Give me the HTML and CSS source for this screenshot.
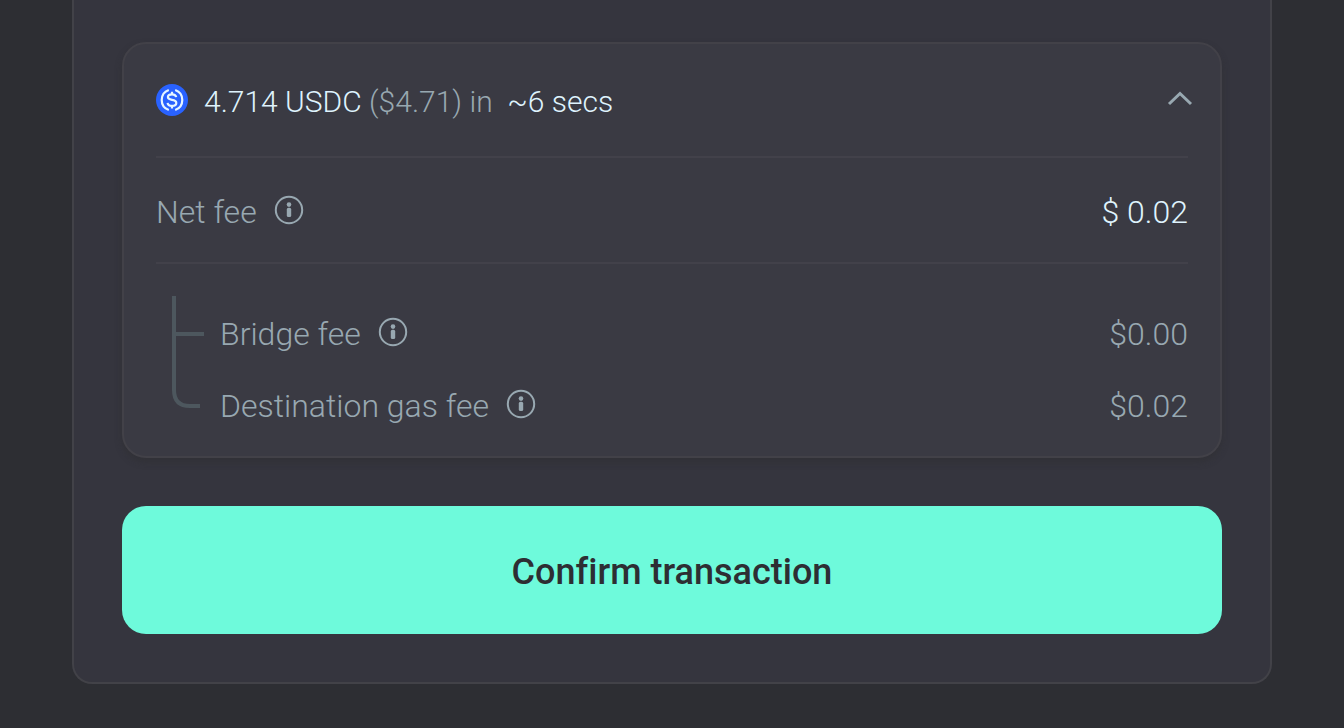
FILE: index.html
```html
<!DOCTYPE html>
<html lang="en">

<head>
  <meta charset="UTF-8">
  <meta name="viewport" content="width=device-width, initial-scale=1.0">
  <title>Confirm transaction</title>
  <link rel="stylesheet" href="styles.css">
</head>

<body>

  <!-- shared icons -->
  <svg class="sprite" aria-hidden="true">
    <symbol id="info" viewBox="0 0 32 32">
      <circle cx="16" cy="16" r="13.2" fill="none" stroke="currentColor" stroke-width="2" />
      <circle cx="16" cy="10.6" r="2.3" fill="currentColor" />
      <rect x="13.800" y="13.800" width="4.400" height="9.200" rx="1.600" fill="currentColor" />
    </symbol>
  </svg>

  <main class="panel">
    <section class="card">

      <div class="row summary">
        <svg class="token" viewBox="0 0 32 32" aria-hidden="true">
          <circle cx="16" cy="16" r="16" fill="#2962ff" />
          <g fill="none" stroke="#e6f5ff" stroke-width="2.2">
            <path d="M12.800 6a10.600 10.600 0 0 0 0 20" />
            <path d="M19.200 6a10.600 10.600 0 0 1 0 20" />
            <path d="M20.2 13.2c-.3-1.900-1.900-2.900-4.200-2.900-2.500 0-4.100 1.100-4.100 2.800 0 1.900 1.700 2.400 4.100 2.800 2.500.4 4.300 1 4.300 3 0 1.800-1.800 2.900-4.300 2.900-2.500 0-4.200-1.100-4.400-3" />
            <path d="M16 7.800v2.600M16 21.700v2.700" />
          </g>
        </svg>
        <p class="text amount">4.714 USDC <span class="muted">($4.71) in</span>&nbsp; ~6 secs</p>
        <button class="toggle" type="button" aria-label="Hide fees" aria-expanded="true">
          <svg viewBox="0 0 32 32" aria-hidden="true">
            <path d="M5 20L16 9.500L27 20" fill="none" stroke="currentColor" stroke-width="3" />
          </svg>
        </button>
      </div>

      <div class="row net">
        <span class="text muted">Net fee</span>
        <button class="info" type="button" aria-label="About net fee"><svg><use href="#info" /></svg></button>
        <span class="text value">$ 0.02</span>
      </div>

      <div class="details">
        <svg class="tree" viewBox="0 0 32 112" aria-hidden="true">
          <path d="M2 0V94Q2 110 18 110H28M2 38H32" fill="none" stroke="currentColor" stroke-width="4" />
        </svg>
        <div class="fees">
          <div class="row fee">
            <span class="text">Bridge fee</span>
            <button class="info" type="button" aria-label="About bridge fee"><svg><use href="#info" /></svg></button>
            <span class="text value">$0.00</span>
          </div>
          <div class="row fee">
            <span class="text">Destination gas fee</span>
            <button class="info" type="button" aria-label="About destination gas fee"><svg><use href="#info" /></svg></button>
            <span class="text value">$0.02</span>
          </div>
        </div>
      </div>

    </section>

    <button class="confirm" type="button">Confirm transaction</button>
  </main>

</body>

</html>
```
FILE: styles.css
```css
* {
  box-sizing: border-box;
  margin: 0;
  padding: 0;
}

body {
  background-color: #2d2e33;
  color: #dff3fd;
  font-family: Roboto, "Liberation Sans", sans-serif;
  font-size: 32px;
  font-weight: 300;
  line-height: 40px;
}

button {
  border: 0;
  background: none;
  color: inherit;
  font: inherit;
  cursor: pointer;
}

svg {
  display: block;
}

.sprite {
  display: none;
}

.panel {
  margin: 0 72px;
  padding: 42px 48px 48px;
  border: 2px solid #424248;
  border-top: 0;
  border-radius: 0 0 20px 20px;
  background-color: #35353e;
}

.card {
  padding: 0 32px 16px;
  border: 2px solid #424148;
  border-radius: 24px;
  background-color: #3a3a43;
  box-shadow: 0 4px 6px rgba(45, 46, 48, 0.5);
}

.row {
  display: flex;
  align-items: center;
}

/* letters sit slightly below the icons */
.text {
  padding-top: 4px;
}

.amount {
  font-size: 30px;
}

.muted {
  color: #98a8b1;
}

.value {
  margin-left: auto;
}

.summary {
  gap: 16px;
  height: 112px;
}

.token {
  width: 32px;
  height: 32px;
}

.toggle {
  margin-left: auto;
  margin-right: -8px;
  color: #98a8b1;
}

.toggle svg,
.info svg {
  width: 32px;
  height: 32px;
}

.net {
  height: 108px;
  border-top: 2px solid #42414a;
  border-bottom: 2px solid #42414a;
}

.info {
  margin-left: 16px;
  color: #98a8b1;
}

.details {
  display: flex;
  gap: 16px;
  padding-top: 32px;
  padding-left: 16px;
  color: #98a8b1;
}

.tree {
  width: 32px;
  height: 112px;
  color: #4d575e;
}

.fees {
  flex: 1;
}

.fee {
  height: 72px;
}

.confirm {
  display: block;
  width: 100%;
  height: 128px;
  margin-top: 48px;
  padding-top: 4px;
  border-radius: 24px;
  background-color: #6efadb;
  color: #2d2e33;
  font-size: 36px;
  font-weight: 500;
  font-variant-ligatures: none;
}
```
